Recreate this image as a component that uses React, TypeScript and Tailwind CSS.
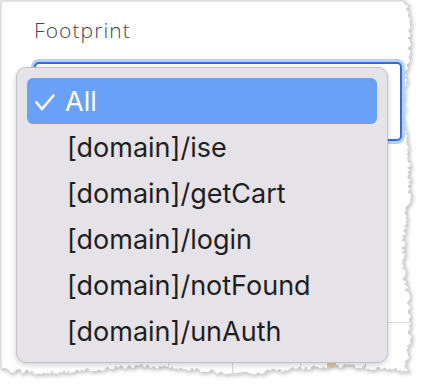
import React from 'react';

const options = ['All', '[domain]/ise', '[domain]/getCart', '[domain]/login', '[domain]/notFound', '[domain]/unAuth'];

// jagged "torn paper" outline, seeded so it is the same every run
function tornPath() {
  let seed = 7;
  const rnd = () => {
    seed = (seed * 16807) % 2147483647;
    return seed / 2147483647;
  };
  const pts: string[] = ['M1 1', 'L404 1'];
  for (let y = 4; y <= 366; y += 2) {
    const x = 407 + Math.sin(y / 23) * 3 + (rnd() - 0.5) * 5;
    pts.push(`L${x.toFixed(1)} ${y}`);
  }
  for (let x = 410; x >= 1; x -= 2) {
    const y = 370 + Math.sin(x / 31) * 3 + (rnd() - 0.5) * 5;
    pts.push(`L${x} ${y.toFixed(1)}`);
  }
  pts.push('L1 368 Z');
  return pts.join(' ');
}

function Paper() {
  const d = tornPath();
  return (
    <svg className="absolute inset-0" width="423" height="384" viewBox="0 0 423 384">
      <defs>
        <filter id="tear" x="-5%" y="-5%" width="110%" height="110%">
          <feDropShadow dx="1" dy="1" stdDeviation="2" floodColor="#000" floodOpacity="0.3" />
        </filter>
        <clipPath id="paperClip">
          <path d={d} />
        </clipPath>
      </defs>
      <path d={d} fill="#fff" stroke="#cbcbcb" strokeWidth="1" filter="url(#tear)" />
      <g clipPath="url(#paperClip)">
        <line x1="388" y1="322.5" x2="420" y2="322.5" stroke="#dcdcdc" />
        {[168.5, 232.5, 300.5, 365.5].map((x) => (
          <line key={x} x1={x} y1="355" x2={x} y2="384" stroke="#d6d6d6" />
        ))}
        <rect x="327" y="355" width="9" height="30" fill="#e9c294" />
      </g>
    </svg>
  );
}

export default function App() {
  return (
    <div className="relative w-[423px] h-[384px] bg-white overflow-hidden">
      <Paper />

      <div className="relative pl-[34px] pt-[16px]">
        <div className="text-[21px] leading-[28px] font-light tracking-[1.1px] text-[#454545] font-['Open_Sans',sans-serif]">
          Footprint
        </div>
        <div className="mt-[18px] w-[368px] h-[79px] rounded-[5px] border-2 border-[#2d6ed6] bg-white shadow-[0_0_0_3px_#b6d0f4]" />
      </div>

      <div className="absolute left-[16px] top-[67px] w-[372px] rounded-[10px] border border-[#c3c1c7] bg-[#e5e2e8] pt-[10px] pb-[8px] px-[10px] shadow-[0_2px_6px_rgba(0,0,0,0.18)] font-['Inter',sans-serif]">
        {options.map((opt, i) => (
          <div
            key={opt}
            className={
              i === 0
                ? 'relative h-[46px] pl-[38px] pt-[1px] rounded-[6px] bg-[#69a1f8] text-white text-[27px] leading-[46px]'
                : 'relative h-[46px] pl-[40px] pt-[1px] text-[#1f1f1f] text-[27px] leading-[46px]'
            }
          >
            {i === 0 && (
              <svg className="absolute left-[8px] top-[16px]" width="20" height="17" viewBox="0 0 20 17">
                <path d="M1.5 8.5 L7 15 L18.5 1.5" fill="none" stroke="#fff" strokeWidth="2.6" strokeLinecap="round" strokeLinejoin="round" />
              </svg>
            )}
            {opt}
          </div>
        ))}
      </div>
    </div>
  );
}
